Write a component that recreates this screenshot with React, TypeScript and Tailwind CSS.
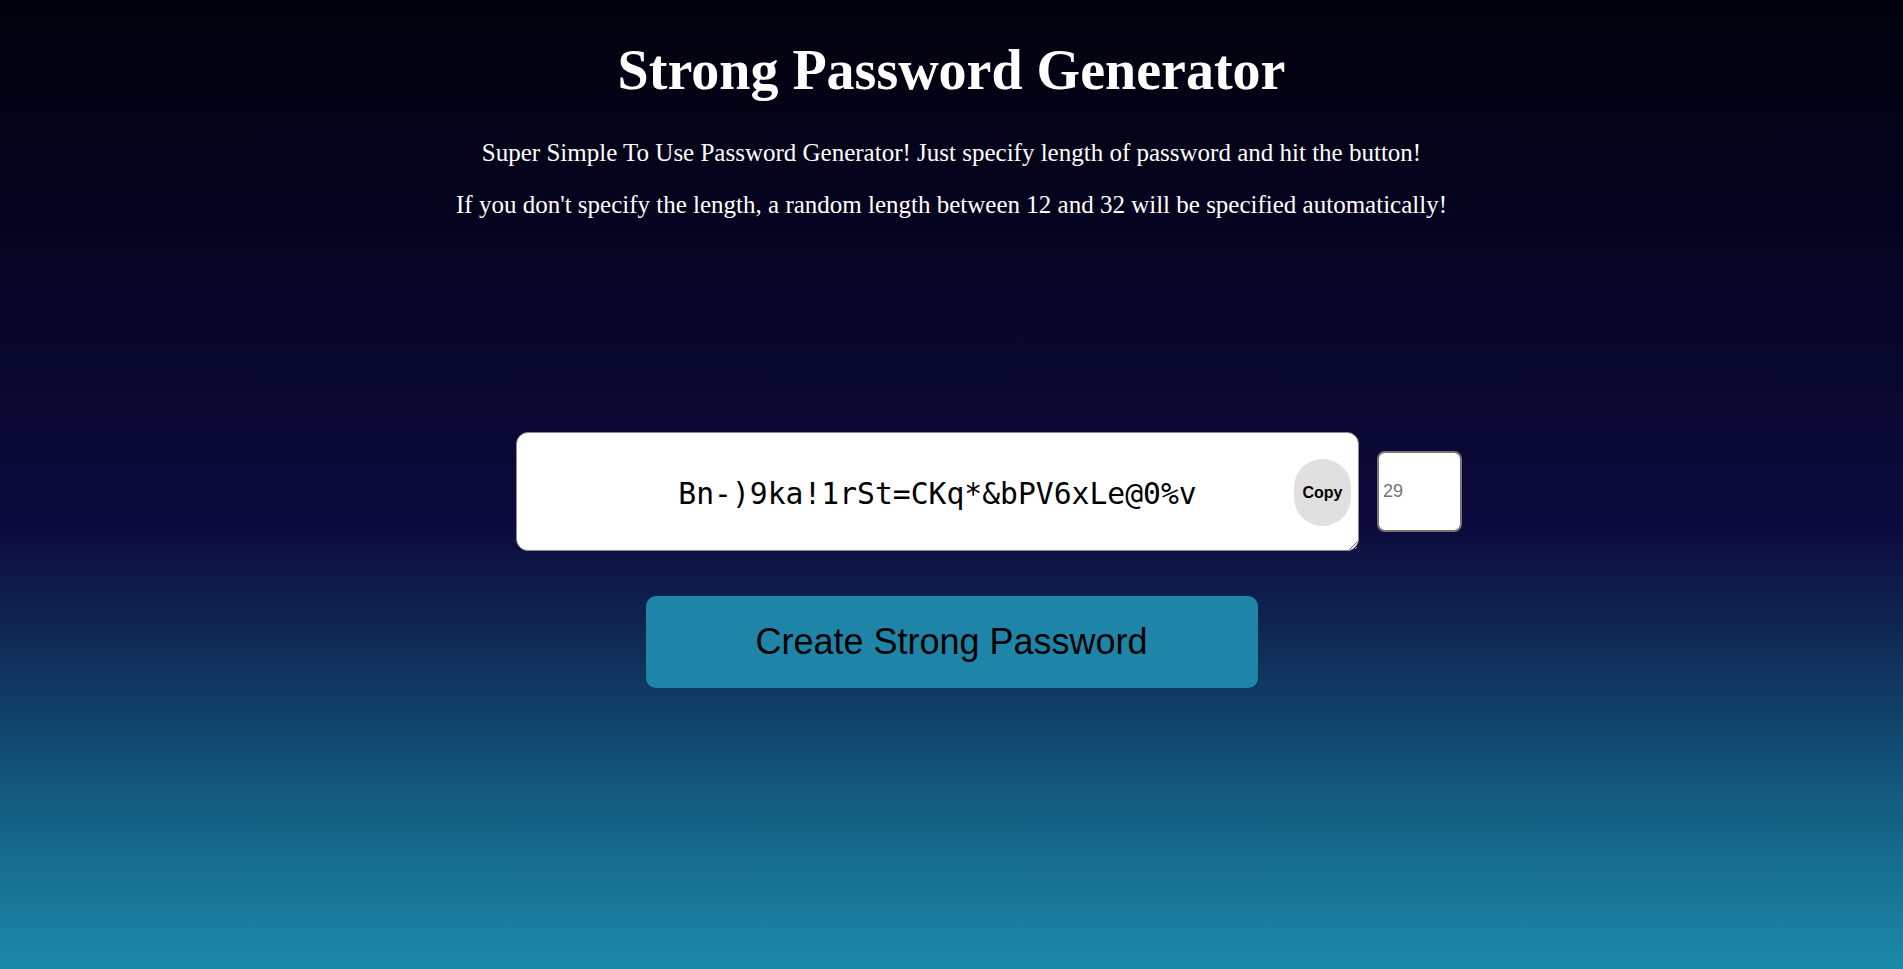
import { useState } from 'react'

export default function App() {
  const [password] = useState('Bn-)9ka!1rSt=CKq*&bPV6xLe@0%v')
  const [length, setLength] = useState('')

  return (
    <div className="h-[969px] w-full overflow-hidden bg-[linear-gradient(to_bottom,#02020d_0%,#060526_30%,#0c0a3c_54%,#0f2a55_66%,#135a7e_82%,#1b8aa8_100%)] font-['Liberation_Serif',serif] text-white">
      <h1 className="pt-[38px] text-center text-[56px] font-bold leading-[64px]">Strong Password Generator</h1>
      <p className="mt-[36px] text-center text-[25px] leading-[29px]">
        Super Simple To Use Password Generator! Just specify length of password and hit the button!
      </p>
      <p className="mt-[23px] text-center text-[25px] leading-[29px]">
        If you don't specify the length, a random length between 12 and 32 will be specified automatically!
      </p>

      <div className="mt-[213px] flex items-center justify-center gap-[18px] pl-[75px]">
        <div className="relative">
          <textarea
            readOnly
            value={password}
            className="block h-[119px] w-[843px] rounded-[12px] border border-[#8a8a8a] bg-white pt-[43px] text-center font-['DejaVu_Sans_Mono',monospace] text-[29.7px] leading-[35px] text-black outline-none"
          />
          <button className="absolute right-[8px] top-[27px] h-[67px] w-[57px] rounded-full bg-[#e0e0e0] font-['Liberation_Sans',Arial,sans-serif] text-[16px] font-bold text-black">
            Copy
          </button>
        </div>
        <input
          type="number"
          placeholder="29"
          value={length}
          onChange={e => setLength(e.target.value)}
          className="h-[81px] w-[85px] rounded-[8px] border-2 border-[#767676] bg-white pl-[4px] font-['Liberation_Sans',Arial,sans-serif] text-[18px] text-black outline-none placeholder:text-[#757575]"
        />
      </div>

      <div className="mt-[45px] flex justify-center">
        <button className="h-[92px] w-[612px] rounded-[10px] bg-[#1f85a8] font-['Liberation_Sans',Arial,sans-serif] text-[36px] text-black">
          Create Strong Password
        </button>
      </div>
    </div>
  )
}
